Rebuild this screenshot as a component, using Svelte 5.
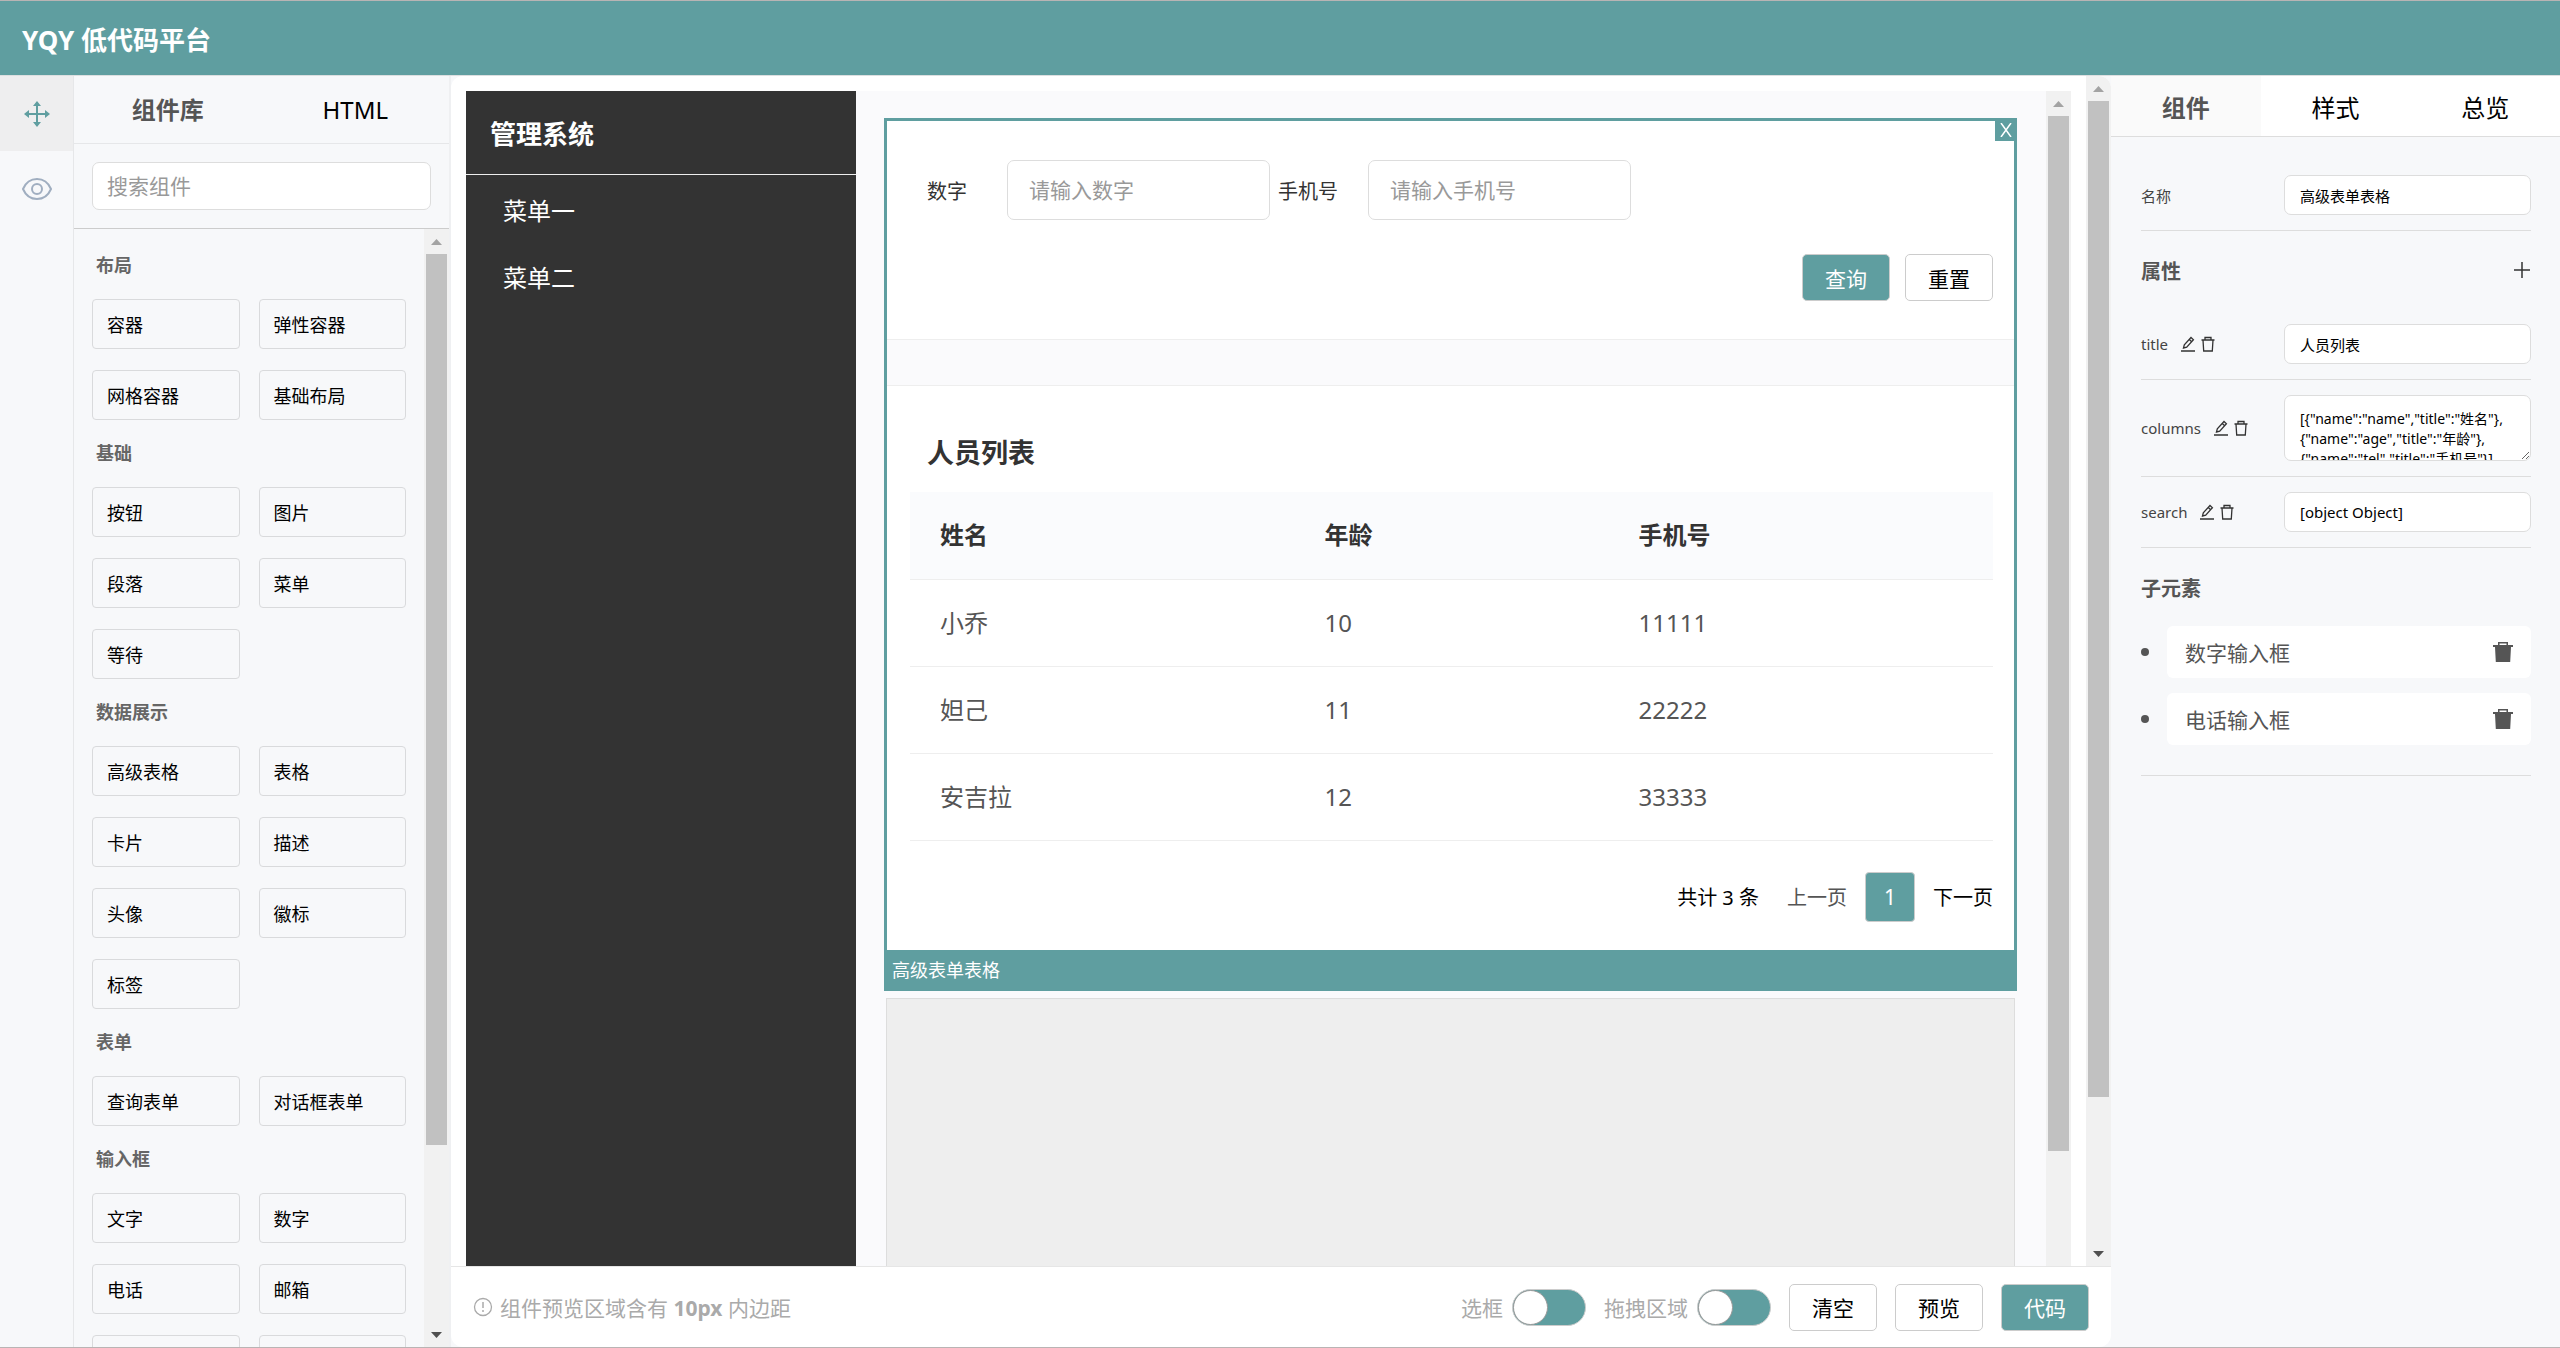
<script>
  const groups = [
    { title: '布局', items: ['容器', '弹性容器', '网格容器', '基础布局'] },
    { title: '基础', items: ['按钮', '图片', '段落', '菜单', '等待'] },
    { title: '数据展示', items: ['高级表格', '表格', '卡片', '描述', '头像', '徽标', '标签'] },
    { title: '表单', items: ['查询表单', '对话框表单'] },
    { title: '输入框', items: ['文字', '数字', '电话', '邮箱', '', ''] }
  ];

  const columns = [
    { name: 'name', title: '姓名' },
    { name: 'age', title: '年龄' },
    { name: 'tel', title: '手机号' }
  ];

  const rows = [
    { name: '小乔', age: 10, tel: '11111' },
    { name: '妲己', age: 11, tel: '22222' },
    { name: '安吉拉', age: 12, tel: '33333' }
  ];

  const children = ['数字输入框', '电话输入框'];

  let keyword = $state('');
  let name = $state('高级表单表格');
  let showFrame = $state(false);
  let showDrop = $state(false);
  let attrs = $state([
    { key: 'title', value: '人员列表' },
    { key: 'columns', value: '[' + columns.map((c) => JSON.stringify(c)).join(',\n') + ']', long: true },
    { key: 'search', value: '[object Object]' }
  ]);
</script>

{#snippet scrollbar(size, down)}
  <div class="scrollbar" aria-hidden="true">
    <svg class="arrow" viewBox="0 0 25 25"><path d="M7 16h11l-5.500-6z" fill="#a3a3a3" /></svg>
    <div class="track"><div class="thumb" style="height: {size}%"></div></div>
    {#if down}
      <svg class="arrow" viewBox="0 0 25 25"><path d="M7 10h11l-5.500 6z" fill="#505050" /></svg>
    {/if}
  </div>
{/snippet}

<div class="app">
  <header class="header"><h1>YQY 低代码平台</h1></header>

  <div class="body">
    <nav class="rail">
      <button class="rail-btn active" aria-label="组件">
        <svg width="28" height="28" viewBox="0 0 28 28" fill="none" stroke="#5f9ea0" stroke-width="2">
          <path d="M14 3v22M3 14h22" />
          <path d="M14 1l4 5h-8zM14 27l4-5h-8zM1 14l5-4v8zM27 14l-5-4v8z" fill="#5f9ea0" stroke="none" />
        </svg>
      </button>
      <button class="rail-btn" aria-label="预览">
        <svg width="30" height="24" viewBox="0 0 30 24" fill="none" stroke="#a0aec0" stroke-width="2">
          <path d="M1 12C4 5 9 2 15 2s11 3 14 10c-3 7-8 10-14 10S4 19 1 12z" />
          <circle cx="15" cy="12" r="5" />
        </svg>
      </button>
    </nav>

    <aside class="library">
      <div class="tabs">
        <button class="tab active">组件库</button>
        <button class="tab">HTML</button>
      </div>
      <div class="search">
        <input type="text" placeholder="搜索组件" aria-label="搜索组件" bind:value={keyword} />
      </div>
      <div class="scroll">
        <div class="groups">
          {#each groups as group}
            <h2>{group.title}</h2>
            <div class="items">
              {#each group.items as item}
                <button class="item">{item}</button>
              {/each}
            </div>
          {/each}
        </div>
        {@render scrollbar(83.4, true)}
      </div>
    </aside>

    <main class="stage">
      <div class="scroll">
        <div class="preview">
          <div class="menu">
            <h2>管理系统</h2>
            <ul>
              <li>菜单一</li>
              <li>菜单二</li>
            </ul>
          </div>
          <div class="canvas">
            <section class="selected">
              <button class="close" aria-label="删除">
                <svg width="12" height="14" viewBox="0 0 12 14" stroke="#fff" stroke-width="1.500">
                  <path d="M1 0l10 14M11 0L1 14" />
                </svg>
              </button>
              <form class="query">
                <div class="fields">
                  <label for="q-num">数字</label>
                  <input id="q-num" type="text" placeholder="请输入数字" />
                  <label class="second" for="q-tel">手机号</label>
                  <input id="q-tel" type="text" placeholder="请输入手机号" />
                </div>
                <div class="actions">
                  <button type="button" class="btn primary">查询</button>
                  <button type="button" class="btn">重置</button>
                </div>
              </form>
              <div class="result">
                <h3>人员列表</h3>
                <table>
                  <thead>
                    <tr>
                      {#each columns as col}
                        <th class={col.name}>{col.title}</th>
                      {/each}
                    </tr>
                  </thead>
                  <tbody>
                    {#each rows as row}
                      <tr>
                        {#each columns as col}
                          <td>{row[col.name]}</td>
                        {/each}
                      </tr>
                    {/each}
                  </tbody>
                </table>
                <div class="pager">
                  <span>共计 {rows.length} 条</span>
                  <button class="page prev">上一页</button>
                  <button class="page current">1</button>
                  <button class="page">下一页</button>
                </div>
              </div>
              <div class="tag">高级表单表格</div>
            </section>
            <div class="drop"></div>
          </div>
          {@render scrollbar(90, false)}
        </div>
        {@render scrollbar(87.4, true)}
      </div>
      <footer class="footer">
        <p>
          <svg width="20" height="20" viewBox="0 0 20 20" fill="none" stroke="#aaa">
            <circle cx="10" cy="10" r="8.500" stroke-width="1.300" />
            <path d="M10 5v6M10 13v2" stroke-width="1.500" />
          </svg>
          <span>组件预览区域含有 <b>10px</b> 内边距</span>
        </p>
        <label>选框 <input type="checkbox" bind:checked={showFrame} /></label>
        <label>拖拽区域 <input type="checkbox" bind:checked={showDrop} /></label>
        <button class="btn">清空</button>
        <button class="btn">预览</button>
        <button class="btn primary">代码</button>
      </footer>
    </main>

    <aside class="props">
      <div class="tabs">
        <button class="tab active">组件</button>
        <button class="tab">样式</button>
        <button class="tab">总览</button>
      </div>
      <div class="panel">
        <div class="row">
          <label for="p-name">名称</label>
          <input id="p-name" type="text" bind:value={name} />
        </div>
        <div class="heading">
          <h2>属性</h2>
          <button class="icon" aria-label="新增属性">
            <svg width="18" height="18" viewBox="0 0 18 18" stroke="#333" stroke-width="1.500"><path d="M9 1v16M1 9h16" /></svg>
          </button>
        </div>
        {#each attrs as attr}
          <div class="row">
            <label for="p-{attr.key}">{attr.key}</label>
            <span class="tools">
              <button class="icon" aria-label="编辑">
                <svg width="16" height="16" viewBox="0 0 16 16" fill="none" stroke="#333" stroke-width="1.300">
                  <path d="M1 15h14M3.500 12l.8-3.200L11 1.500l2.400 2.200-6.700 7.500zM9.300 3.500l2.300 2.200" />
                </svg>
              </button>
              <button class="icon" aria-label="删除">
                <svg width="16" height="16" viewBox="0 0 16 16" fill="none" stroke="#333" stroke-width="1.300">
                  <path d="M1.500 4h13M5 4V1.500h6V4M3 4l.7 11h8.600L13 4" />
                </svg>
              </button>
            </span>
            {#if attr.long}
              <textarea id="p-{attr.key}" bind:value={attr.value}></textarea>
            {:else}
              <input id="p-{attr.key}" type="text" bind:value={attr.value} />
            {/if}
          </div>
        {/each}
        <div class="heading"><h2>子元素</h2></div>
        <ul class="children">
          {#each children as child}
            <li>
              <div class="child">
                {child}
                <button class="icon" aria-label="删除">
                  <svg width="20" height="22" viewBox="0 0 20 22" fill="#555">
                    <path d="M5 4V1h10v3h5v2h-2l-.8 15H2.800L2 6H0V4zM6.500 4h7V2.500h-7z" fill-rule="evenodd" />
                  </svg>
                </button>
              </div>
            </li>
          {/each}
        </ul>
      </div>
    </aside>
  </div>
</div>

<style>
  :global(body) {
    margin: 0;
  }
  .app {
    display: flex;
    flex-direction: column;
    height: 100vh;
    box-sizing: border-box;
    border-top: 1px solid #b9b4b4;
    border-bottom: 1px solid #b9b4b4;
    font-family: 'Noto Sans', 'Noto Sans CJK SC', sans-serif;
    font-size: 21px;
    color: #000;
    background: #f7f8fa;
    overflow: hidden;
  }
  .app :is(button, input, textarea) {
    box-sizing: border-box;
    margin: 0;
    font-family: inherit;
    color: inherit;
  }
  h1, h2, h3, p, ul {
    margin: 0;
    padding: 0;
  }
  button {
    padding: 0;
    border: 0;
    background: none;
    cursor: pointer;
  }
  input::placeholder {
    color: #999;
    opacity: 1;
  }
  svg {
    display: block;
  }

  .header {
    display: flex;
    align-items: center;
    flex: none;
    height: 70px;
    padding: 4px 22px 0;
    border-bottom: 1px solid #dcdfe0;
    background: #5f9ea0;
  }
  .header h1 {
    font-size: 26px;
    line-height: 36px;
    color: #fff;
  }
  .body {
    display: flex;
    flex: 1;
    min-height: 0;
  }

  .rail {
    width: 73px;
    flex: none;
    border-right: 1px solid #e6e7e9;
  }
  .rail-btn {
    display: flex;
    align-items: center;
    justify-content: center;
    width: 100%;
    height: 75px;
  }
  .rail-btn.active {
    background: #eeeeef;
  }

  .library {
    display: flex;
    flex-direction: column;
    flex: none;
    width: 375px;
    border-right: 2px solid #eff0f2;
  }
  .tabs {
    display: flex;
    flex: none;
  }
  .tab {
    flex: 1;
    font-size: 24px;
    line-height: 32px;
  }
  .app .tab.active {
    font-weight: bold;
    color: #555;
  }
  .library .tabs {
    height: 67px;
    border-bottom: 1px solid #e6e7e9;
  }
  .search {
    padding: 18px;
    border-bottom: 1px solid #ccc;
  }
  .search input {
    display: block;
    width: 100%;
    height: 48px;
    padding: 0 14px;
    border: 1px solid #ddd;
    border-radius: 7px;
    font-size: 21px;
    background: #fff;
  }
  .scroll {
    display: flex;
    flex: 1;
    min-height: 0;
    overflow: hidden;
  }
  .groups {
    flex: 1;
    padding: 3px 18px 0;
  }
  .groups h2 {
    padding: 0 4px;
    font-size: 18px;
    line-height: 67px;
    color: #666;
  }
  .items {
    display: grid;
    grid-template-columns: 1fr 1fr;
    gap: 21px 19px;
  }
  .item {
    height: 50px;
    padding: 0 14px;
    border: 1px solid #d9dadc;
    border-radius: 4px;
    font-size: 18px;
    text-align: left;
  }

  .scrollbar {
    display: flex;
    flex-direction: column;
    flex: none;
    width: 25px;
    background: #f1f1f1;
  }
  .arrow {
    width: 25px;
    height: 25px;
  }
  .track {
    flex: 1;
    padding: 0 2px;
  }
  .thumb {
    background: #c1c1c1;
  }

  .stage {
    display: flex;
    flex-direction: column;
    flex: 1;
    min-width: 0;
    border-radius: 12px;
    background: #fff;
    overflow: hidden;
  }
  .preview {
    display: flex;
    flex: 1;
    padding: 15px 15px 0;
  }
  .menu {
    flex: none;
    width: 390px;
    color: #fff;
    background: #333;
  }
  .menu h2 {
    padding: 4px 24px 0;
    border-bottom: 1px solid #eee;
    font-size: 26px;
    line-height: 79px;
  }
  .menu ul {
    padding: 2px 37px;
    list-style: none;
    font-size: 24px;
    line-height: 67px;
  }
  .canvas {
    display: flex;
    flex-direction: column;
    flex: 1;
    gap: 7px;
    padding: 27px 29px 0 28px;
    background: #fafafc;
  }
  .selected {
    position: relative;
    border: 3px solid #5f9ea0;
    border-bottom: 0;
    background: #fff;
  }
  .close {
    position: absolute;
    top: -3px;
    right: -3px;
    display: flex;
    align-items: center;
    justify-content: center;
    width: 22px;
    height: 23px;
    background: #5f9ea0;
  }
  .query {
    padding: 39px 21px 38px 40px;
    border-bottom: 1px solid #eee;
  }
  .fields {
    display: flex;
    align-items: center;
    font-size: 20px;
  }
  .fields label {
    flex: none;
    width: 80px;
    color: #333;
  }
  .fields label.second {
    width: 90px;
    margin-left: 8px;
  }
  .fields input {
    width: 263px;
    height: 60px;
    padding: 0 21px;
    border: 1px solid #ddd;
    border-radius: 7px;
    font-size: 21px;
    background: #fff;
  }
  .actions {
    display: flex;
    justify-content: flex-end;
    gap: 15px;
    margin-top: 34px;
  }
  .btn {
    width: 88px;
    height: 47px;
    border: 1px solid #ccc;
    border-radius: 5px;
    font-size: 21px;
    background: #fff;
  }
  .app .btn.primary {
    color: #fff;
    background: #5f9ea0;
  }
  .result {
    padding: 0 21px 28px 23px;
    border-top: 45px solid #fafafc;
  }
  .result h3 {
    padding: 41px 17px 13px;
    font-size: 27px;
    line-height: 52px;
    color: #333;
  }
  .result::before {
    content: '';
    display: block;
    height: 1px;
    margin: 0 -21px 0 -23px;
    background: #eee;
  }
  table {
    width: 100%;
    border-collapse: collapse;
    table-layout: fixed;
    font-size: 24px;
    line-height: 32px;
  }
  th, td {
    box-sizing: border-box;
    height: 87px;
    padding: 0 30px;
    border-bottom: 1px solid #eee;
    text-align: left;
    color: #555;
  }
  th {
    color: #333;
    background: #fafbfd;
  }
  th.name {
    width: 35.5%;
  }
  th.age {
    width: 29%;
  }
  .pager {
    display: flex;
    align-items: center;
    justify-content: flex-end;
    gap: 18px;
    margin-top: 31px;
    font-size: 20px;
  }
  .page {
    font-size: 20px;
  }
  .app .page.prev {
    margin-left: 10px;
    color: #555;
  }
  .app .page.current {
    width: 50px;
    height: 50px;
    border: 1px solid #ccc;
    border-radius: 4px;
    font-size: 21px;
    color: #fff;
    background: #5f9ea0;
  }
  .tag {
    padding: 0 5px;
    font-size: 18px;
    line-height: 41px;
    color: #fff;
    background: #5f9ea0;
  }
  .drop {
    flex: 1;
    margin: 0 2px;
    border: 1px solid #ddd;
    border-bottom: 0;
    background: #eee;
  }

  .footer {
    display: flex;
    align-items: center;
    flex: none;
    gap: 18px;
    height: 80px;
    padding: 0 22px;
    border-top: 1px solid #e6e6e6;
    color: #aaa;
  }
  .footer p {
    display: flex;
    align-items: center;
    gap: 7px;
    margin-right: auto;
  }
  .footer label {
    display: flex;
    align-items: center;
    gap: 9px;
  }
  .footer .btn {
    color: #000;
  }
  .footer input {
    width: 74px;
    height: 37px;
    border: 1px solid #ccc;
    border-radius: 19px;
    appearance: none;
    background: #5f9ea0;
  }
  .footer input::before {
    content: '';
    display: block;
    box-sizing: border-box;
    width: 35px;
    height: 35px;
    border: 1px solid #999;
    border-radius: 50%;
    background: #fff;
  }

  .props {
    flex: none;
    width: 449px;
  }
  .props .tabs {
    height: 60px;
    border-bottom: 1px solid #ddd;
    background: #fff;
  }
  .props .tab {
    padding-top: 3px;
  }
  .props .tab.active {
    background: #fafafa;
  }
  .panel {
    padding: 23px 29px 0 30px;
  }
  .row {
    display: flex;
    align-items: center;
    padding: 15px 0;
    border-bottom: 1px solid #ddd;
    font-size: 15px;
    color: #444;
  }
  .app .row input,
  .app .row textarea {
    flex: none;
    width: 247px;
    height: 40px;
    margin-left: auto;
    padding: 0 15px;
    border: 1px solid #ddd;
    border-radius: 7px;
    font-size: 15px;
    line-height: 20px;
    color: #000;
    background: #fff;
  }
  .app .row textarea {
    height: 66px;
    padding: 13px 15px;
    font-size: 14px;
    white-space: pre;
    overflow: hidden;
  }
  .tools {
    display: flex;
    gap: 4px;
    margin-left: 12px;
  }
  .heading {
    display: flex;
    align-items: center;
    justify-content: space-between;
    height: 78px;
  }
  .heading h2 {
    font-size: 20px;
    color: #555;
  }
  .children {
    padding-bottom: 30px;
    border-bottom: 1px solid #ddd;
    list-style: none;
  }
  .children li {
    display: flex;
    align-items: center;
    gap: 18px;
  }
  .children li::before {
    content: '';
    width: 8px;
    height: 8px;
    border-radius: 50%;
    background: #555;
  }
  .children li + li {
    margin-top: 15px;
  }
  .child {
    display: flex;
    align-items: center;
    justify-content: space-between;
    flex: 1;
    height: 52px;
    padding: 0 18px;
    border-radius: 6px;
    color: #555;
    background: #fff;
  }
</style>
